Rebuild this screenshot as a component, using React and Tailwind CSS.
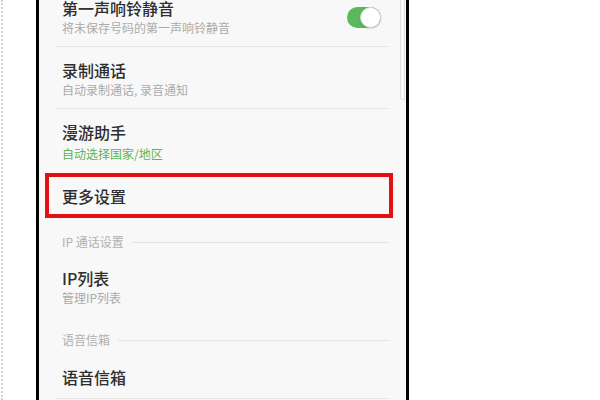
import React from "react";

const font = { fontFamily: '"Noto Sans CJK SC", "Noto Sans", sans-serif' };

const Toggle = () => (
    <div className="w-[34px] h-[21px] rounded-full bg-[#5cb85c] relative shrink-0">
        <div className="absolute right-0 top-0 w-[21px] h-[21px] rounded-full bg-white border border-[#d6d6d6] shadow-sm" />
    </div>
);

const Row = ({ title, sub, subClass = "text-[#ababab]", pt = "pt-[13px]", pb = "pb-[10px]", gap = "mt-[2px]", divider = true, right }) => (
    <div className={`mx-[17px] pl-[6px] pr-[8px] flex items-center ${pt} ${pb} ${divider ? "border-b border-[#e6e6e6]" : ""}`}>
        <div className="flex-1">
            <div className="text-[16px] leading-[20px] font-medium text-[#2e2e2e]">{title}</div>
            {sub && <div className={`text-[12px] leading-[16px] ${gap} ${subClass}`}>{sub}</div>}
        </div>
        {right}
    </div>
);

const Header = ({ label, pt }) => (
    <div className={`mx-[17px] pl-[6px] flex items-center gap-2 ${pt}`}>
        <span className="text-[12px] leading-[16px] text-[#b0b0b0]">{label}</span>
        <div className="flex-1 h-px bg-[#e3e3e3]" />
    </div>
);

export default function App() {
    return (
        <div className="w-[600px] h-[400px] bg-white flex overflow-hidden" style={font}>
            {/* dotted page edge */}
            <div className="w-[36px] h-full">
                <div className="ml-[1px] h-full border-l-2 border-dotted border-[#d4d4d4]" />
            </div>

            {/* phone screen */}
            <div className="w-[373px] h-full border-x-[3px] border-black bg-[#f8f8f8] relative overflow-hidden">
                <div className="absolute right-[1px] top-0 w-[5px] h-[100px] rounded-b-full border border-t-0 border-[#dedede]" />

                <div className="mt-[-16px]">
                    <Row
                        title="第一声响铃静音"
                        sub="将未保存号码的第一声响铃静音"
                        pt="pt-[14px]"
                        pb="pb-[10px]"
                        right={<Toggle />}
                    />
                    <Row title="录制通话" sub="自动录制通话, 录音通知" />
                    <Row
                        title="漫游助手"
                        sub="自动选择国家/地区"
                        subClass="text-[#5fb352]"
                        gap="mt-[4px]"
                        pb="pb-[11px]"
                        divider={false}
                    />

                    {/* highlighted row */}
                    <div className="ml-[6px] mr-[13px] h-[45px] border-4 border-[#e21010] flex items-center pl-[13px]">
                        <span className="text-[16px] leading-[20px] font-medium text-[#2e2e2e] mt-[1px]">更多设置</span>
                    </div>

                    <Header label="IP 通话设置" pt="pt-[16px]" />
                    <Row title="IP列表" sub="管理IP列表" pt="pt-[18px]" pb="pb-0" divider={false} />

                    <Header label="语音信箱" pt="pt-[26px]" />
                    <Row title="语音信箱" pt="pt-[19px]" pb="pb-[11px]" />
                </div>
            </div>

            <div className="flex-1 h-full bg-white" />
        </div>
    );
}
